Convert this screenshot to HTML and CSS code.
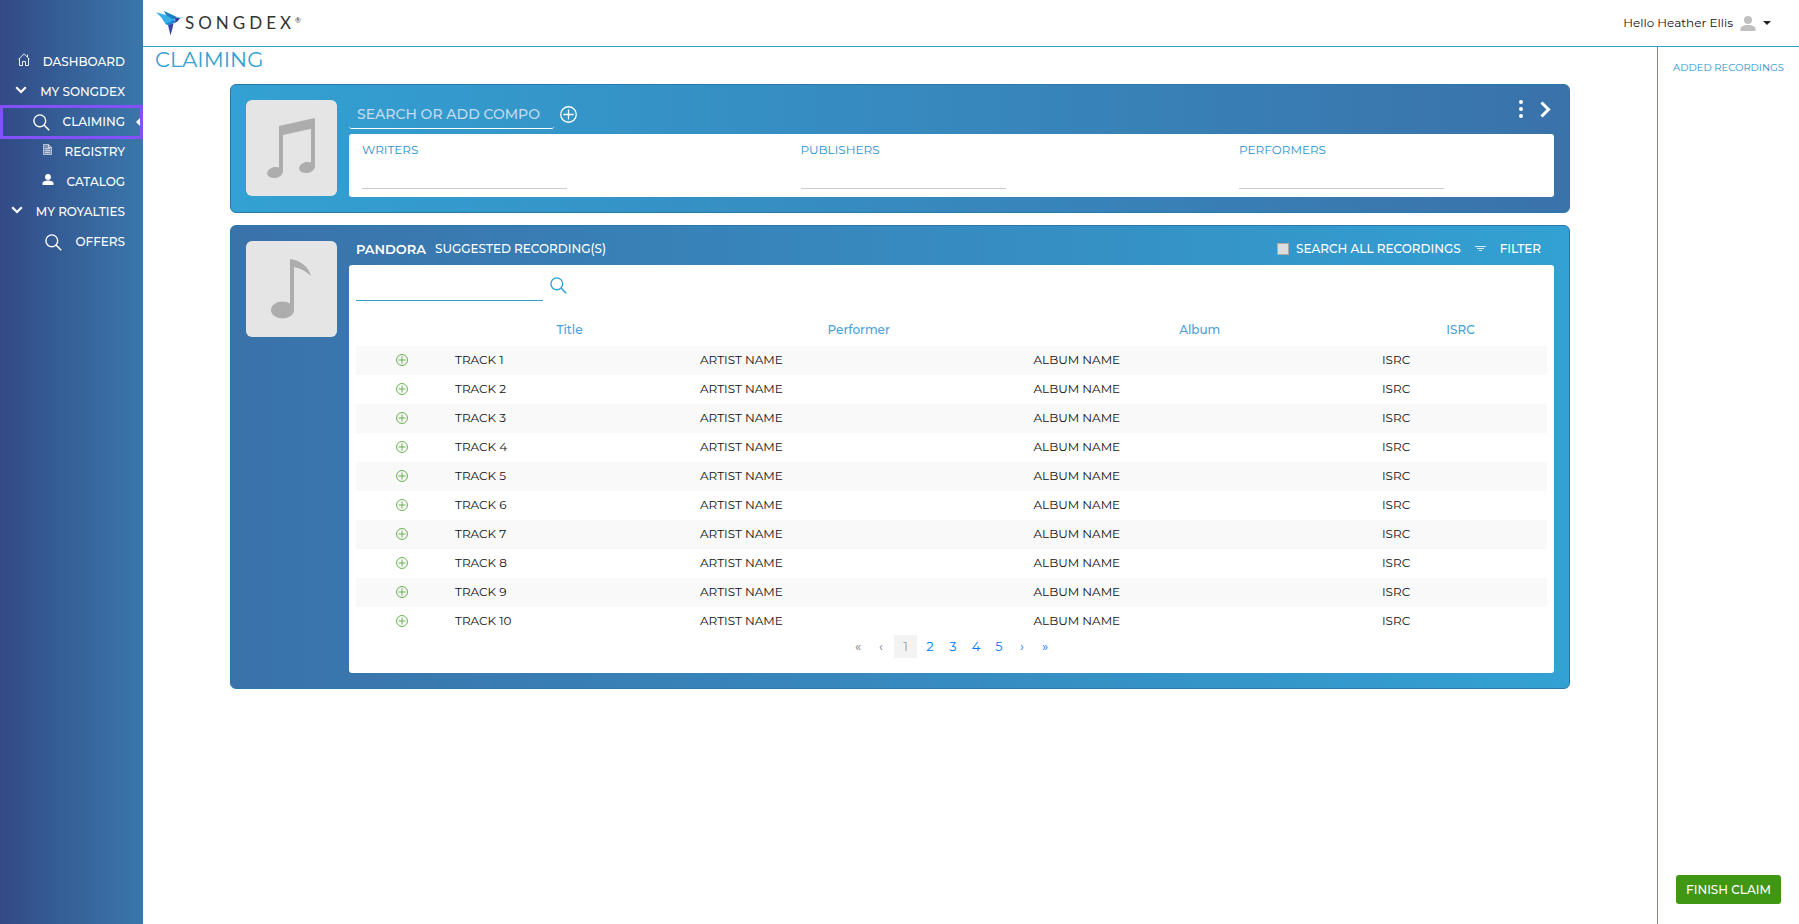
FILE: index.html
```html
<!DOCTYPE html>
<html lang="en">
<head>
    <meta charset="utf-8">
    <title>Songdex - Claiming</title>
    <link rel="stylesheet" href="styles.css">
</head>
<body>
    <!-- shared icons -->
    <svg class="sprite" aria-hidden="true">
        <symbol id="icon-search" viewBox="0 0 17 17">
            <circle cx="6.8" cy="6.8" r="5.9" fill="none" stroke="currentColor" stroke-width="1.4"/>
            <path d="M11 11l5.2 5.2" fill="none" stroke="currentColor" stroke-width="1.6"/>
        </symbol>
        <symbol id="icon-plus" viewBox="0 0 16 16">
            <circle cx="8" cy="8" r="7.3" fill="none" stroke="currentColor" stroke-width="1.2"/>
            <path d="M8 3.2v9.6M3.2 8h9.6" fill="none" stroke="currentColor" stroke-width="1.2"/>
        </symbol>
        <symbol id="icon-chevron" viewBox="0 0 12 8">
            <path d="M1.2 1.2L6 6l4.8-4.8" fill="none" stroke="currentColor" stroke-width="2.2"/>
        </symbol>
        <symbol id="icon-user" viewBox="0 0 16 15">
            <circle cx="8" cy="4" r="4" fill="currentColor"/>
            <path d="M.5 15v-2.500c0-2.200 4-3.500 7.500-3.500s7.500 1.300 7.500 3.500V15z" fill="currentColor"/>
        </symbol>
    </svg>

    <nav class="sidebar">
        <a href="#" class="nav-item">
            <svg class="icon-home" viewBox="0 0 12 13"><path d="M1.500 5.500v7h3v-4h3v4h3v-7M.5 6.300L6 .8l5.500 5.500M9.500 1.500v2.500" fill="none" stroke="currentColor" stroke-width=".9"/></svg>
            DASHBOARD
        </a>
        <a href="#" class="nav-item"><svg class="icon-chevron"><use href="#icon-chevron"/></svg>MY SONGDEX</a>
        <a href="#" class="nav-item active"><svg class="icon-search"><use href="#icon-search"/></svg>CLAIMING</a>
        <a href="#" class="nav-item">
            <svg class="icon-doc" viewBox="0 0 9 11"><path d="M.5.5h5l3 3v7h-8z" fill="currentColor" fill-opacity=".35"/><path d="M.5.5h5l3 3v7h-8zM5.500.5v3h3M2 4.500h5M2 6.500h5M2 8.500h5" fill="none" stroke="currentColor" stroke-width=".7" opacity=".8"/></svg>
            REGISTRY
        </a>
        <a href="#" class="nav-item"><svg class="icon-person"><use href="#icon-user"/></svg>CATALOG</a>
        <a href="#" class="nav-item"><svg class="icon-chevron"><use href="#icon-chevron"/></svg>MY ROYALTIES</a>
        <a href="#" class="nav-item"><svg class="icon-search"><use href="#icon-search"/></svg>OFFERS</a>
    </nav>

    <div class="page">
        <header class="topbar">
            <a href="#" class="logo">
                <svg class="logo-bird" viewBox="0 0 30 25">
                    <path d="M1 1.300l19 5.200-1 5-6 2.500-2.500-1L6 6z" fill="#36b0ea"/>
                    <path d="M9 0l13 6-4 2.500L11 4z" fill="#1e7fc0"/>
                    <path d="M20 6.200l10 .2-6 1.400-4 1z" fill="#7ccdf2"/>
                    <path d="M10.500 13l8.500-4 2 1-3 2.500-5 1.500z" fill="#1c86cf"/>
                    <path d="M19.500 6.500l5.500.5-2 3-4 2.500 1.500-3z" fill="#343f9c"/>
                    <path d="M13 14l5.500-1.800-1 5-2 7.300z" fill="#3b47a5"/>
                </svg>
                <span class="logo-text">SONGDEX<sup>®</sup></span>
            </a>
            <button class="user-menu">
                Hello Heather Ellis
                <svg class="icon-avatar"><use href="#icon-user"/></svg>
                <span class="caret"></span>
            </button>
        </header>

        <div class="content">
            <main>
                <h1>CLAIMING</h1>

                <section class="card">
                    <div class="cover">
                        <svg viewBox="0 0 91 96">
                            <path d="M33 26l36-8v10l-32 7v37h-4z" fill="#adadad"/>
                            <path d="M65 22h4v45h-4z" fill="#adadad"/>
                            <ellipse cx="29" cy="72.500" rx="8" ry="5.500" transform="rotate(-10 29 72.500)" fill="#adadad"/>
                            <ellipse cx="61" cy="67.500" rx="8" ry="5.500" transform="rotate(-10 61 67.500)" fill="#adadad"/>
                        </svg>
                    </div>
                    <div class="card-body">
                        <div class="card-head">
                            <input type="text" class="search-comp" placeholder="SEARCH OR ADD COMPOSITION" aria-label="Search or add composition">
                            <button class="icon-btn" aria-label="Add"><svg class="icon-plus"><use href="#icon-plus"/></svg></button>
                            <div class="card-tools">
                                <button class="icon-btn" aria-label="More">
                                    <svg class="icon-dots" viewBox="0 0 4 18"><circle cx="2" cy="2" r="2" fill="#fff"/><circle cx="2" cy="9" r="2" fill="#fff"/><circle cx="2" cy="16" r="2" fill="#fff"/></svg>
                                </button>
                                <button class="icon-btn" aria-label="Next">
                                    <svg class="icon-next" viewBox="0 0 11 17"><path d="M1.500 1.500l7 7-7 7" fill="none" stroke="#fff" stroke-width="3"/></svg>
                                </button>
                            </div>
                        </div>
                        <div class="panel people">
                            <div class="field"><label for="writers">WRITERS</label><input type="text" id="writers"></div>
                            <div class="field"><label for="publishers">PUBLISHERS</label><input type="text" id="publishers"></div>
                            <div class="field"><label for="performers">PERFORMERS</label><input type="text" id="performers"></div>
                        </div>
                    </div>
                </section>

                <section class="card card-recordings">
                    <div class="cover">
                        <svg viewBox="0 0 91 96">
                            <path d="M44 18c10 1 19 8 21 17-5-5-11-8-17-9v43h-4z" fill="#adadad"/>
                            <ellipse cx="36.500" cy="69" rx="11.500" ry="8.500" fill="#adadad"/>
                        </svg>
                    </div>
                    <div class="card-body">
                        <div class="card-head">
                            <span class="brand">PANDORA</span>
                            <span class="suggested">SUGGESTED RECORDING(S)</span>
                            <div class="card-tools">
                                <input type="checkbox" id="search-all">
                                <label for="search-all">SEARCH ALL RECORDINGS</label>
                                <button class="filter-btn">
                                    <svg class="icon-filter" viewBox="0 0 11 6"><path d="M0 .5h11M2 2.500h7M4 4.500h3" fill="none" stroke="#fff" opacity=".8"/></svg>
                                    FILTER
                                </button>
                            </div>
                        </div>
                        <div class="panel">
                            <div class="track-search">
                                <input type="text" aria-label="Search recordings">
                                <button class="icon-btn" aria-label="Search"><svg class="icon-search"><use href="#icon-search"/></svg></button>
                            </div>
                            <table>
                                <colgroup><col class="c-add"><col class="c-title"><col class="c-performer"><col class="c-album"><col class="c-isrc"></colgroup>
                                <thead>
                                    <tr><th></th><th>Title</th><th>Performer</th><th>Album</th><th>ISRC</th></tr>
                                </thead>
                                <tbody id="tracks"></tbody>
                            </table>
                            <div class="pagination">
                                <a href="#" class="disabled">«</a>
                                <a href="#" class="disabled">‹</a>
                                <a href="#" class="current">1</a>
                                <a href="#">2</a>
                                <a href="#">3</a>
                                <a href="#">4</a>
                                <a href="#">5</a>
                                <a href="#">›</a>
                                <a href="#">»</a>
                            </div>
                        </div>
                    </div>
                </section>
            </main>

            <aside class="added">
                <h2>ADDED RECORDINGS</h2>
                <button class="finish">FINISH CLAIM</button>
            </aside>
        </div>
    </div>

    <script>
        var tracks = document.getElementById('tracks');
        for (var i = 1; i <= 10; i++) {
            var row = document.createElement('tr');
            row.innerHTML = `
                <td><button class="icon-btn" aria-label="Add track ${i}"><svg class="icon-add"><use href="#icon-plus"/></svg></button></td>
                <td>TRACK ${i}</td>
                <td>ARTIST NAME</td>
                <td>ALBUM NAME</td>
                <td>ISRC</td>
            `;
            tracks.appendChild(row);
        }
    </script>
</body>
</html>
```
FILE: styles.css
```css
* {
    box-sizing: border-box;
}

body {
    display: flex;
    min-height: 100vh;
    margin: 0;
    font-family: Montserrat, Inter, sans-serif;
    font-size: 12px;
    line-height: 16px;
    color: #111;
}

button, input {
    font: inherit;
    color: inherit;
    padding: 0;
    border: none;
    background: none;
}

a {
    color: inherit;
    text-decoration: none;
}

svg {
    display: block;
    flex: none;
}

.sprite {
    position: absolute;
    width: 0;
    height: 0;
}

/* sidebar */
.sidebar {
    flex: none;
    width: 143px;
    padding-top: 47px;
    background: linear-gradient(to right, #324a86, #3a77ab);
    color: #fff;
}

.nav-item {
    display: flex;
    align-items: center;
    justify-content: flex-end;
    gap: 13px;
    height: 30px;
    padding-right: 18px;
    font-weight: 500;
}

.nav-item svg {
    margin-bottom: 5px;
}

.nav-item .icon-search {
    margin-bottom: 0;
}

.nav-item.active {
    position: relative;
    height: 34px;
    margin: -2px 0;
    padding-right: 15px;
    border: 3px solid #8450fa;
}

.nav-item.active::after {
    content: "";
    position: absolute;
    right: 0;
    top: 10px;
    border: 4px solid transparent;
    border-left: none;
    border-right-color: #fff;
}

.icon-search {
    width: 17px;
    height: 17px;
}

.icon-chevron {
    width: 12px;
    height: 8px;
}

.icon-home {
    width: 12px;
    height: 13px;
}

.icon-doc {
    width: 9px;
    height: 11px;
}

.icon-person {
    width: 12px;
    height: 11px;
}

/* header */
.page {
    flex: 1;
    display: flex;
    flex-direction: column;
    min-width: 0;
}

.topbar {
    display: flex;
    align-items: center;
    justify-content: space-between;
    height: 47px;
    padding: 0 28px 0 12px;
    border-bottom: 1px solid #339fd2;
}

.logo {
    display: flex;
    align-items: center;
}

.logo-bird {
    width: 30px;
    height: 25px;
}

.logo-text {
    font-family: Lato, sans-serif;
    font-size: 17px;
    letter-spacing: 4px;
    color: #333;
}

.logo-text sup {
    font-size: 7px;
    letter-spacing: 0;
    vertical-align: 6px;
    line-height: 0;
}

.user-menu {
    display: flex;
    align-items: center;
    gap: 7px;
}

.icon-avatar {
    width: 16px;
    height: 15px;
    color: #c0c0c0;
}

.caret {
    border: 4px solid transparent;
    border-top-color: #212529;
    border-bottom: none;
}

/* main */
.content {
    flex: 1;
    display: flex;
}

main {
    flex: 1;
    padding: 0 87px;
}

h1 {
    margin: 0 0 11px -75px;
    font-size: 21px;
    line-height: 26px;
    font-weight: 400;
    color: #339fd2;
}

.card {
    display: flex;
    align-items: flex-start;
    gap: 12px;
    padding: 15px;
    margin-bottom: 12px;
    border: 1px solid #2a78aa;
    border-radius: 6px;
    background: linear-gradient(to right, #33a1d3, #3a72aa);
    color: #fff;
}

.card-recordings {
    background: linear-gradient(to right, #3a72aa, #33a1d3);
}

.cover {
    flex: none;
    width: 91px;
    height: 96px;
    border-radius: 6px;
    background: #e5e5e5;
}

.card-body {
    flex: 1;
    min-width: 0;
}

.card-head {
    display: flex;
    align-items: center;
    height: 28px;
    margin-bottom: 6px;
}

.card-recordings .card-head {
    height: 16px;
    margin-bottom: 8px;
    padding-left: 7px;
    font-weight: 500;
}

.card-tools {
    display: flex;
    align-items: center;
    margin-left: auto;
}

.search-comp {
    width: 205px;
    height: 29px;
    margin-right: 6px;
    padding: 0 13px 0 8px;
    border-bottom: 1px solid #fff;
    border-radius: 3px;
    font-size: 14px;
    font-weight: 500;
}

.search-comp::placeholder {
    color: #c4dcee;
}

.icon-plus {
    width: 17px;
    height: 17px;
}

.icon-dots {
    width: 4px;
    height: 18px;
    margin: 0 17px 10px 0;
}

.icon-next {
    width: 11px;
    height: 17px;
    margin: 0 3px 10px 0;
}

.panel {
    padding: 7px;
    border-radius: 3px;
    background: #fff;
    color: #111;
}

.people {
    display: flex;
    justify-content: space-between;
    padding: 8px 110px 8px 13px;
}

.field {
    width: 205px;
}

.field label {
    display: block;
    color: #1f93cc;
}

.field input {
    width: 100%;
    height: 31px;
    border-bottom: 1px solid #ccc;
}

/* recordings */
.brand {
    font-size: 13px;
    font-weight: 600;
    margin-right: 9px;
}

#search-all {
    appearance: none;
    width: 12px;
    height: 12px;
    margin: 0 7px 0 0;
    border: 1px solid #aaa;
    background: #ddd;
}

.filter-btn {
    display: flex;
    align-items: center;
    gap: 14px;
    margin: 0 13px 0 14px;
}

.icon-filter {
    width: 11px;
    height: 6px;
}

.track-search {
    display: flex;
    align-items: center;
    gap: 7px;
    color: #339fd2;
}

.track-search input {
    width: 187px;
    height: 29px;
    border-bottom: 1px solid #339fd2;
}

.track-search .icon-search {
    margin-bottom: 2px;
}

table {
    width: 100%;
    margin-top: 15px;
    table-layout: fixed;
    border-collapse: collapse;
}

.c-add { width: 91px; }
.c-title { width: 245px; }
.c-performer { width: 28%; }
.c-isrc { width: 173px; }

th {
    height: 30px;
    padding: 0 0 2px;
    font-weight: 500;
    color: #4a9fd6;
}

td {
    height: 29px;
    padding: 0 8px 2px;
}

td:first-child {
    padding: 0 0 2px;
}

tbody tr:nth-child(odd) {
    background: #f9f9f9;
}

td .icon-btn {
    display: block;
    margin: 0 auto;
    color: #56a83c;
}

.icon-add {
    width: 12px;
    height: 12px;
}

.pagination {
    display: flex;
    justify-content: center;
    gap: 3px;
    margin-top: -1px;
    padding-bottom: 8px;
    font-size: 13px;
    line-height: 23px;
    text-align: center;
    color: #007bff;
}

.pagination a {
    width: 20px;
}

.pagination .disabled {
    color: #777;
}

.pagination .current {
    width: 23px;
    background: #f3f3f3;
    color: #999;
}

/* added recordings */
.added {
    flex: none;
    display: flex;
    flex-direction: column;
    align-items: center;
    justify-content: space-between;
    width: 142px;
    padding: 13px 0 20px;
    border-left: 1px solid #339fd2;
}

h2 {
    margin: 0;
    font-size: 10px;
    line-height: 16px;
    font-weight: 400;
    color: #1f93cc;
}

.finish {
    height: 29px;
    padding: 0 10px;
    border-radius: 3px;
    background: #3f9714;
    color: #fff;
    font-weight: 500;
}
```
